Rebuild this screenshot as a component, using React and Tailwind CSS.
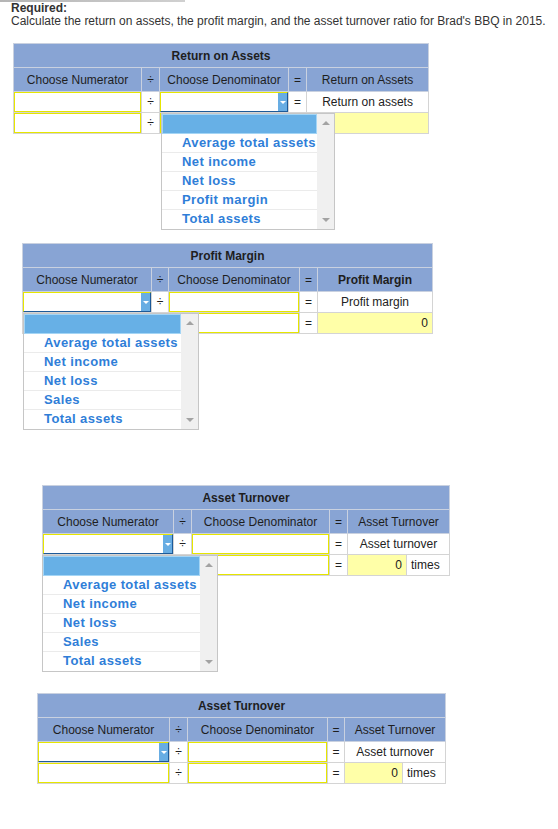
import React from "react";

const optionsA = ["Average total assets", "Net income", "Net loss", "Profit margin", "Total assets"];
const optionsB = ["Average total assets", "Net income", "Net loss", "Sales", "Total assets"];

const Select = ({ focus }) => {
  return (
    <div
      className={
        focus
          ? "relative h-[20px] bg-white border border-[#e6e600] border-r-[#1d5a98] border-b-[#1d5a98]"
          : "relative h-[20px] bg-white border border-[#e6e600]"
      }
    >
      {focus && (
        <div className="absolute right-0 top-0 bottom-0 w-[9px] bg-[#68ade3] flex items-center justify-center">
          <div className="w-0 h-0 border-l-[3px] border-r-[3px] border-t-[3px] border-l-transparent border-r-transparent border-t-white" />
        </div>
      )}
    </div>
  );
};

const Dropdown = ({ pos, options }) => {
  return (
    <div className={`absolute top-[70px] z-10 flex bg-white border border-[#c6c6c6] ${pos}`}>
      <div className="flex-1 flex flex-col">
        <div className="h-[20px] bg-[#67b0e6] border border-[#a4d5f5]" />
        {options.map((o, i) => (
          <div
            key={o}
            className={
              i < options.length - 1
                ? "h-[19px] leading-[17px] pl-[20px] border-b border-[#ebebeb] text-[13px] font-bold tracking-[0.4px] text-[#2f7ed8] whitespace-nowrap"
                : "h-[19px] leading-[17px] pl-[20px] text-[13px] font-bold tracking-[0.4px] text-[#2f7ed8] whitespace-nowrap"
            }
          >
            {o}
          </div>
        ))}
      </div>
      <div className="w-[17px] bg-[#f0f0f0] flex flex-col items-center justify-between py-[7px]">
        <div className="w-0 h-0 border-l-[4px] border-r-[4px] border-b-[4px] border-l-transparent border-r-transparent border-b-[#a3a3a3]" />
        <div className="w-0 h-0 border-l-[4px] border-r-[4px] border-t-[4px] border-l-transparent border-r-transparent border-t-[#a3a3a3]" />
      </div>
    </div>
  );
};

const Calc = ({ wrap, width, cols, title, resHead, resLabel, times, zero, focus, dropdown }) => {
  const hd = "border border-[#c9d1e0] bg-[#88a4d4] h-[24px] text-center p-0 text-[#1e1e1e]";
  const cell = "border border-[#d4d4d4] bg-white h-[21px] p-0";
  const span = times ? 2 : 1;
  return (
    <div className={`relative ${wrap}`}>
      <table className={`table-fixed border-collapse border border-[#c4c4c4] ${width}`}>
        <colgroup>
          {cols.map((c, i) => (
            <col key={i} className={c} />
          ))}
        </colgroup>
        <tbody>
          <tr>
            <td colSpan={cols.length} className={`${hd} font-bold`}>
              {title}
            </td>
          </tr>
          <tr>
            <td className={hd}>Choose Numerator</td>
            <td className={hd}>÷</td>
            <td className={hd}>Choose Denominator</td>
            <td className={hd}>=</td>
            <td colSpan={span} className={resHead === "Profit Margin" ? `${hd} font-bold` : hd}>
              {resHead}
            </td>
          </tr>
          <tr>
            <td className={cell}>
              <Select focus={focus === "num"} />
            </td>
            <td className={`${cell} text-center`}>÷</td>
            <td className={cell}>
              <Select focus={focus === "den"} />
            </td>
            <td className={`${cell} text-center`}>=</td>
            <td colSpan={span} className={`${cell} text-center`}>
              {resLabel}
            </td>
          </tr>
          <tr>
            <td className={cell}>
              <Select />
            </td>
            <td className={`${cell} text-center`}>÷</td>
            <td className={cell}>
              <Select />
            </td>
            <td className={`${cell} text-center`}>=</td>
            <td className="border border-[#d4d4d4] bg-[#ffffa8] h-[21px] p-0 text-right pr-[4px]">{zero ? "0" : ""}</td>
            {times && <td className={`${cell} pl-[4px]`}>times</td>}
          </tr>
        </tbody>
      </table>
      {dropdown}
    </div>
  );
};

const App = () => {
  return (
    <div className="w-[558px] h-[829px] bg-white font-['Liberation_Sans',Arial,sans-serif] text-[12px] text-[#222]">
      <div className="h-[2px] w-[185px] bg-gradient-to-r from-[#b5b5b5] to-[#d0d0d0]" />
      <div className="pl-[11px] leading-[13px] text-[#333]">
        <div className="font-bold">Required:</div>
        <div>Calculate the return on assets, the profit margin, and the asset turnover ratio for Brad's BBQ in 2015.</div>
      </div>

      <Calc
        wrap="ml-[13px] mt-[15px]"
        width="w-[415px]"
        cols={["w-[128px]", "w-[18px]", "w-[129px]", "w-[18px]", "w-[122px]"]}
        title="Return on Assets"
        resHead="Return on Assets"
        resLabel="Return on assets"
        focus="den"
        dropdown={<Dropdown pos="left-[148px] w-[174px]" options={optionsA} />}
      />

      <Calc
        wrap="ml-[22px] mt-[109px]"
        width="w-[410px]"
        cols={["w-[129px]", "w-[17px]", "w-[131px]", "w-[18px]", "w-[115px]"]}
        title="Profit Margin"
        resHead="Profit Margin"
        resLabel="Profit margin"
        zero
        focus="num"
        dropdown={<Dropdown pos="left-[1px] w-[176px]" options={optionsB} />}
      />

      <Calc
        wrap="ml-[42px] mt-[151px]"
        width="w-[407px]"
        cols={["w-[131px]", "w-[18px]", "w-[138px]", "w-[18px]", "w-[59px]", "w-[43px]"]}
        title="Asset Turnover"
        resHead="Asset Turnover"
        resLabel="Asset turnover"
        times
        zero
        focus="num"
        dropdown={<Dropdown pos="left-[0px] w-[176px]" options={optionsB} />}
      />

      <Calc
        wrap="ml-[37px] mt-[117px]"
        width="w-[408px]"
        cols={["w-[132px]", "w-[18px]", "w-[140px]", "w-[17px]", "w-[58px]", "w-[43px]"]}
        title="Asset Turnover"
        resHead="Asset Turnover"
        resLabel="Asset turnover"
        times
        zero
        focus="num"
      />
    </div>
  );
};

export default App;
